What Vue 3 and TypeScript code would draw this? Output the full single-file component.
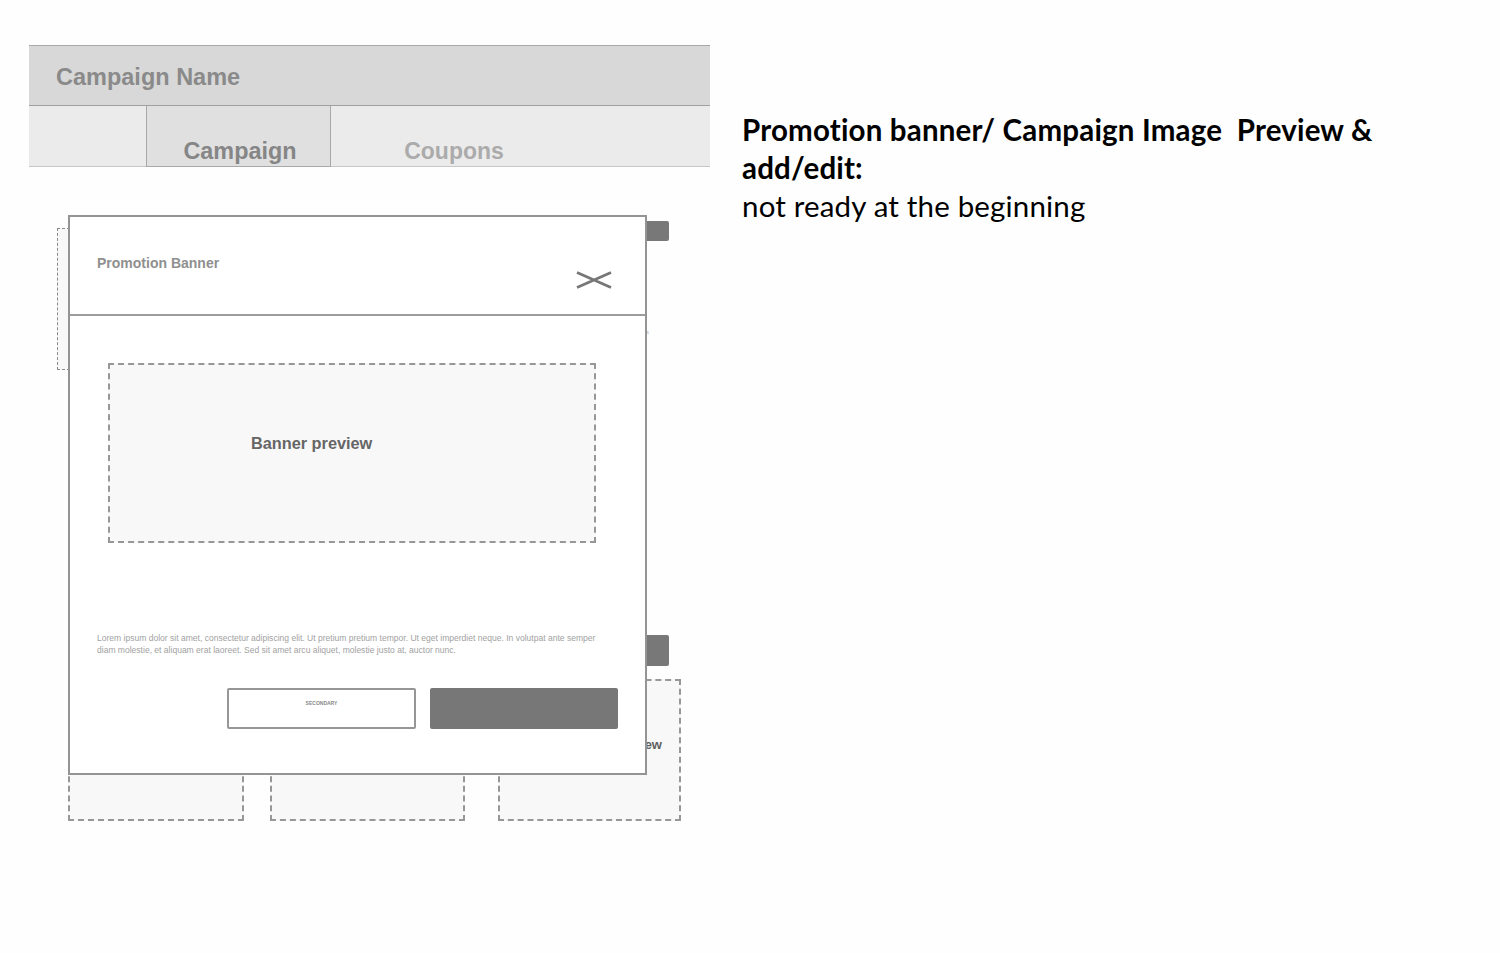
<script setup lang="ts">
const tabs: { label: string; active: boolean }[] = [
  { label: 'Campaign', active: true },
  { label: 'Coupons', active: false },
]
</script>

<template>
  <main class="page">
    <section class="wire">
      <header class="title-bar">Campaign Name</header>
      <nav class="tabs">
        <div v-for="tab in tabs" :key="tab.label" class="tab" :class="{ active: tab.active }">{{ tab.label }}</div>
      </nav>
      <div class="canvas">
        <div class="back-top">
          <div class="dash back-hero"></div>
          <div class="back-btn small"></div>
        </div>
        <span class="speck">s</span>
        <div class="back-btn large"></div>
        <div class="back-row">
          <div class="dash cell one"></div>
          <div class="dash cell two"></div>
          <div class="dash cell three"><span>Banner preview</span></div>
        </div>
        <div class="modal">
          <div class="modal-head">
            <h2>Promotion Banner</h2>
            <svg class="close" width="36" height="18" viewBox="0 0 36 18" aria-hidden="true">
              <path d="M1 1.5 L35 16.5 M1 16.5 L35 1.5" stroke="#767676" stroke-width="2.6" fill="none" />
            </svg>
          </div>
          <div class="modal-body">
            <div class="dash preview"><strong>Banner preview</strong></div>
            <p class="lorem">Lorem ipsum dolor sit amet, consectetur adipiscing elit. Ut pretium pretium tempor. Ut eget imperdiet neque. In volutpat ante semper diam molestie, et aliquam erat laoreet. Sed sit amet arcu aliquet, molestie justo at, auctor nunc.</p>
            <div class="actions">
              <button class="btn secondary">SECONDARY</button>
              <button class="btn primary"></button>
            </div>
          </div>
        </div>
      </div>
    </section>
    <aside class="notes">
      <p><b>Promotion banner/ Campaign Image&nbsp; Preview &amp; add/edit:</b><br />not ready at the beginning</p>
    </aside>
  </main>
</template>

<style>
html, body { margin: 0; background: #fff; }
</style>

<style scoped>
.page {
  display: flex;
  width: 1500px;
  height: 953px;
  overflow: hidden;
  background: #fefefe;
  font-family: "Liberation Sans", Arial, sans-serif;
  box-sizing: border-box;
  padding: 45px 0 0 29px;
}
.wire { width: 681px; flex: none; }
.title-bar {
  height: 59px;
  border-top: 1px solid #a9a9a9;
  border-bottom: 1px solid #a0a0a0;
  background: #d8d8d8;
  color: #8a8a8a;
  font-size: 23.5px;
  font-weight: 700;
  line-height: 62px;
  padding-left: 27px;
}
.tabs {
  display: flex;
  height: 60px;
  padding-left: 117px;
  background: #ebebeb;
  border-bottom: 1px solid #c6c6c6;
}
.tab {
  width: 184px;
  box-sizing: border-box;
  font-size: 23px;
  font-weight: 700;
  color: #ababab;
  text-align: center;
  padding-top: 30px;
  line-height: 30px;
  margin-left: 31px;
}
.tab.active {
  width: 185px;
  height: 61px;
  margin-left: 0;
  padding-left: 3px;
  background: #e0e0e0;
  border: 1px solid #a8a8a8;
  border-top: 0;
  color: #868686;
  font-size: 23.4px;
}
.canvas { position: relative; height: 655px; }
.dash {
  border: 2px dashed #979797;
  background: #f8f8f8;
  box-sizing: border-box;
}
.back-top {
  display: flex;
  align-items: flex-start;
  padding: 53px 0 0 28px;
}
.back-hero {
  width: 560px;
  height: 142px;
  margin-top: 8px;
  border-width: 1px;
  border-color: #8a8a8a;
}
.back-btn { background: #787878; border-radius: 2px; }
.back-btn.small { width: 24px; height: 20px; margin: 1px 0 0 28px; }
.back-btn.large { width: 24px; height: 31px; margin: 265px 0 0 616px; }
.speck {
  position: absolute;
  left: 617px;
  top: 162px;
  font-size: 6px;
  color: #b5b5b5;
}
.back-row {
  display: flex;
  align-items: flex-end;
  padding: 0 0 0 39px;
  height: 155px;
}
.cell { height: 142px; }
.cell.one { width: 176px; }
.cell.two { width: 195px; margin-left: 26px; }
.cell.three {
  width: 183px;
  margin-left: 33px;
  position: relative;
}
.cell.three span {
  position: absolute;
  right: 17px;
  top: 56px;
  font-size: 13px;
  font-weight: 700;
  color: #5f5f5f;
  white-space: nowrap;
}
.modal {
  position: absolute;
  left: 39px;
  top: 48px;
  width: 579px;
  height: 560px;
  box-sizing: border-box;
  background: #fff;
  border: 2px solid #949494;
}
.modal-head {
  height: 97px;
  position: relative;
  border-bottom: 2px solid #9c9c9c;
}
.modal-head h2 {
  margin: 0;
  padding: 38px 0 0 27px;
  font-size: 14px;
  line-height: 16px;
  font-weight: 700;
  color: #8f8f8f;
}
.close { position: absolute; left: 506px; top: 54px; }
.modal-body { padding: 47px 27px 0 38px; }
.preview {
  width: 488px;
  height: 180px;
  padding: 68px 0 0 141px;
}
.preview strong {
  font-size: 16.3px;
  line-height: 20px;
  color: #666;
}
.lorem {
  width: 510px;
  margin: 89px 0 0 -11px;
  font-size: 8.54px;
  line-height: 12px;
  color: #a2a2a2;
}
.actions {
  display: flex;
  justify-content: flex-end;
  gap: 14px;
  margin-top: 32px;
}
.btn {
  height: 41px;
  box-sizing: border-box;
  border-radius: 2px;
  font-family: inherit;
}
.secondary {
  width: 189px;
  background: #fff;
  border: 2px solid #969696;
  font-size: 5px;
  font-weight: 700;
  line-height: 6px;
  color: #8a8a8a;
  padding: 0 0 11px;
}
.primary { width: 188px; background: #777; border: 0; padding: 0; }
.notes {
  margin-left: 32px;
  width: 680px;
  padding-top: 66px;
  font-family: Lato, "Open Sans", sans-serif;
  font-size: 29.5px;
  letter-spacing: 0.17px;
  line-height: 38px;
  color: #000;
}
.notes p { margin: 0; }
.notes b { font-weight: 700; }
</style>
